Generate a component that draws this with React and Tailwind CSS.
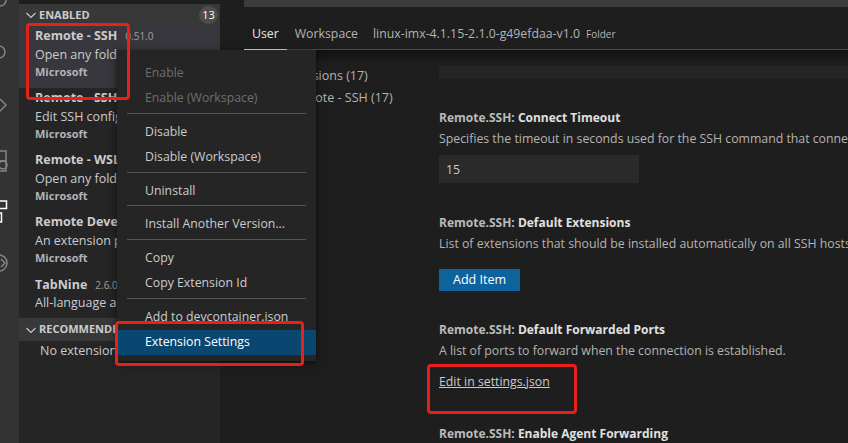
import React from "react";

const font = { fontFamily: '"Open Sans", "Noto Sans", sans-serif' };

// Extension entries in the side bar list
const extensions = [
  { name: "Remote - SSH", version: "0.51.0", desc: "Open any folder on a remote machine", pub: "Microsoft", active: true },
  { name: "Remote - SSH: Editing", version: "0.51.0", desc: "Edit SSH configuration files", pub: "Microsoft" },
  { name: "Remote - WSL", version: "0.44.2", desc: "Open any folder in WSL", pub: "Microsoft" },
  { name: "Remote Development", version: "0.20.0", desc: "An extension pack for remote work", pub: "Microsoft" },
];

function ExtensionRow({ name, version, desc, pub, active }) {
  return (
    <div className={`h-[62px] pl-4 pt-[1px] ${active ? "bg-[#37373d]" : ""}`}>
      <div className="flex h-[18px] items-baseline gap-2 whitespace-nowrap">
        <span className="text-[12.5px] font-bold leading-[18px] text-[#cccccc]">{name}</span>
        <span className="text-[10px] leading-[18px] text-[#a0a0a0]">{version}</span>
      </div>
      <div className="whitespace-nowrap text-[12.5px] leading-[19px] text-[#cccccc]">{desc}</div>
      <div className="-mt-px text-[11px] font-bold leading-[18px] text-[#b4b4b4]">{pub}</div>
    </div>
  );
}

function MenuItem({ children, disabled, active }) {
  return (
    <div
      className={`flex h-[25px] items-center pl-7 text-[12.3px] ${
        active ? "bg-[#094771] text-white" : disabled ? "text-[#6e6e6e]" : "text-[#cccccc]"
      }`}
    >
      {children}
    </div>
  );
}

function MenuSeparator({ tight }) {
  return <div className={`mx-[10px] mb-[6px] h-px bg-[#555555] ${tight ? "mt-[1px]" : "mt-[2px]"}`} />;
}

function Setting({ title, desc, children, className }) {
  return (
    <div className={className}>
      <div className="whitespace-nowrap text-[12px] font-bold leading-[20px] text-[#e0e0e0]">
        <span className="text-[#bbbbbb]">Remote.SSH: </span>
        {title}
      </div>
      {desc && <div className="mt-[1px] whitespace-nowrap text-[12.3px] leading-[20px] text-[#b4b4b4]">{desc}</div>}
      {children}
    </div>
  );
}

function ActivityBar() {
  return (
    <div className="relative w-[19px] shrink-0 overflow-hidden bg-[#333333]">
      <svg width="19" height="290" viewBox="0 0 19 290" fill="none" stroke="#858585" strokeWidth="1.5">
        <circle cx="0" cy="0" r="6" />
        <circle cx="-1" cy="52" r="6" />
        <path d="M-1 98l7 7-7 7" />
        <rect x="-6" y="151" width="12" height="10" />
        <rect x="-6" y="161" width="12" height="10" />
        <circle cx="3" cy="165" r="4" />
        <rect x="-3" y="201" width="9.5" height="7.5" stroke="#ffffff" />
        <rect x="-6" y="213" width="7.5" height="9" stroke="#ffffff" />
        <circle cx="-1" cy="263" r="8" />
        <path d="M1 259l4 4-4 4" />
      </svg>
    </div>
  );
}

export default function App() {
  return (
    <div className="relative flex h-[443px] w-[848px] overflow-hidden bg-[#1e1e1e]" style={font}>
      <ActivityBar />

      {/* Extensions side bar */}
      <div className="flex w-[201px] shrink-0 flex-col overflow-hidden bg-[#252526]">
        <div className="h-[4px] shrink-0 bg-[#1e1e1e]" />
        <div className="flex h-[22px] shrink-0 items-center bg-[#383838] pl-1 pr-[2px]">
          <svg width="16" height="16" viewBox="0 0 16 16" fill="none" stroke="#cccccc" strokeWidth="1.1">
            <path d="M3.5 6l4.5 4.5L12.5 6" />
          </svg>
          <span className="text-[11px] font-bold text-[#cccccc]">ENABLED</span>
          <span className="ml-auto flex h-[18px] w-[19px] items-center justify-center rounded-full bg-[#4d4d4d] text-[11px] text-white">
            13
          </span>
        </div>
        {extensions.map((e) => (
          <ExtensionRow key={e.name} {...e} />
        ))}
        <div className="h-[35px] pl-4 pt-[2px]">
          <div className="flex h-[18px] items-baseline gap-2 whitespace-nowrap">
            <span className="text-[12.5px] font-bold leading-[18px] text-[#cccccc]">TabNine</span>
            <span className="text-[10px] leading-[18px] text-[#a0a0a0]">2.6.0</span>
          </div>
          <div className="whitespace-nowrap text-[12.5px] leading-[18px] text-[#cccccc]">All-language autocomplete</div>
        </div>
        <div className="mt-[9px] flex h-[23px] shrink-0 items-center bg-[#383838] pl-1">
          <svg width="16" height="16" viewBox="0 0 16 16" fill="none" stroke="#cccccc" strokeWidth="1.1">
            <path d="M3.5 6l4.5 4.5L12.5 6" />
          </svg>
          <span className="text-[11px] font-bold text-[#cccccc]">RECOMMENDED</span>
        </div>
        <div className="whitespace-nowrap pl-[21px] pt-[1px] text-[12.5px] text-[#cccccc]">No extensions found.</div>
      </div>

      {/* Settings editor */}
      <div className="flex min-w-0 flex-1 flex-col">
        <div className="ml-[24px] h-[7px] shrink-0 bg-[#3c3c3c]" />
        <div className="ml-[24px] flex h-[43px] shrink-0 items-center border-b border-[#4a4a4a] pt-[12px] text-[12.3px] text-[#b4b4b4]">
          <div className="relative flex h-full items-center px-[8px] text-[#e7e7e7]">
            User
            <div className="absolute inset-x-0 bottom-[-1px] h-px bg-[#e0e0e0]" />
          </div>
          <span className="ml-[8px] whitespace-nowrap">Workspace</span>
          <span className="ml-[15px] whitespace-nowrap">linux-imx-4.1.15-2.1.0-g49efdaa-v1.0</span>
          <span className="ml-1.5 text-[10px]">Folder</span>
        </div>
        <div className="h-[14px] shrink-0 bg-gradient-to-b from-[#111111] to-[#1e1e1e]" />

        <div className="flex min-h-0 flex-1">
          {/* Settings tree */}
          <div className="w-[219px] shrink-0 whitespace-nowrap pl-[60px] pt-[1px] text-[12.5px] leading-[22px] text-[#b4b4b4]">
            <div>Extensions (17)</div>
            <div className="pl-[9px]">Remote - SSH (17)</div>
          </div>

          <div className="min-w-0 flex-1 overflow-hidden">
            <div className="mt-[2px] h-[13px] bg-[#252525]" />
            <Setting className="mt-[29px]" title="Connect Timeout" desc="Specifies the timeout in seconds used for the SSH command that connects to the remote.">
              <div className="mt-[6px] flex h-[28px] w-[200px] items-center bg-[#2a2a2a] pl-[7px] pt-[2px] text-[12.3px] text-[#cccccc]">15</div>
            </Setting>
            <Setting className="mt-[30px]" title="Default Extensions" desc="List of extensions that should be installed automatically on all SSH hosts.">
              <div className="mt-[15px] flex h-[22px] w-[81px] items-center justify-center bg-[#0e639c] text-[12.5px] text-white">Add Item</div>
            </Setting>
            <Setting className="mt-[29px]" title="Default Forwarded Ports" desc="A list of ports to forward when the connection is established.">
              <div className="mt-[12px] whitespace-nowrap text-[12.3px] text-[#cccccc] underline">Edit in settings.json</div>
            </Setting>
            <Setting className="mt-[33px]" title="Enable Agent Forwarding" />
          </div>
        </div>
      </div>

      {/* Extension context menu */}
      <div className="absolute left-[117px] top-[50px] w-[199px] bg-[#252526] pb-[6px] pt-[11px] shadow-[0_2px_8px_rgba(0,0,0,0.6)]">
        <MenuItem disabled>Enable</MenuItem>
        <MenuItem disabled>Enable (Workspace)</MenuItem>
        <MenuSeparator />
        <MenuItem>Disable</MenuItem>
        <MenuItem>Disable (Workspace)</MenuItem>
        <MenuSeparator />
        <MenuItem>Uninstall</MenuItem>
        <MenuSeparator tight />
        <MenuItem>Install Another Version...</MenuItem>
        <MenuSeparator />
        <MenuItem>Copy</MenuItem>
        <MenuItem>Copy Extension Id</MenuItem>
        <MenuSeparator />
        <MenuItem>Add to devcontainer.json</MenuItem>
        <MenuItem active>Extension Settings</MenuItem>
      </div>

      {/* Red callouts drawn over the window */}
      <div className="absolute left-[26px] top-[23px] h-[77px] w-[104px] rounded-sm border-[3px] border-[#e8201a]" />
      <div className="absolute left-[115px] top-[321px] h-[45px] w-[189px] rounded-sm border-[3px] border-[#e8201a]" />
      <div className="absolute left-[427px] top-[364px] h-[50px] w-[150px] rounded-sm border-[3px] border-[#e8201a]" />
    </div>
  );
}
